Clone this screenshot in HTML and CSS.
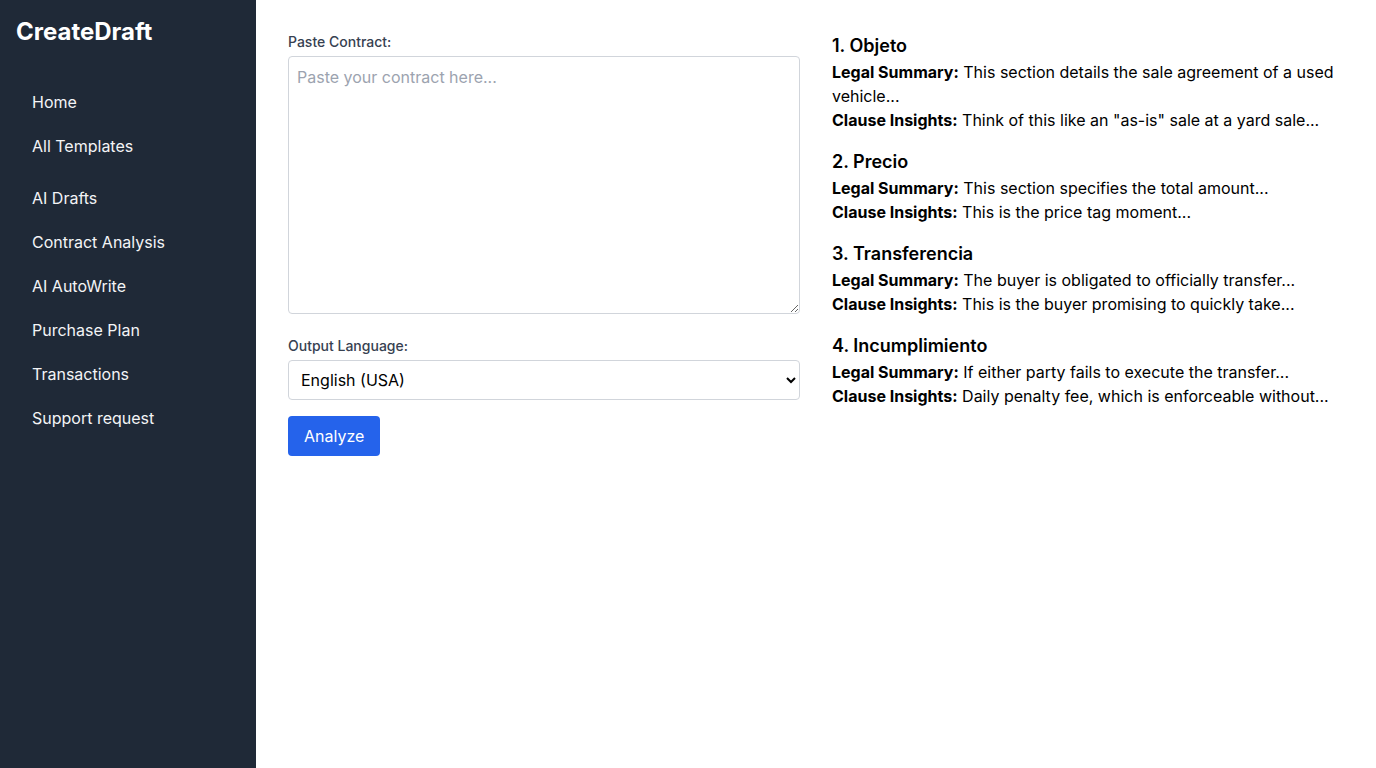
FILE: index.html
```html
<!DOCTYPE html>
<html lang="en">
<head>
<meta charset="utf-8">
<title>CreateDraft - Contract Analysis</title>
<link rel="stylesheet" href="styles.css">
</head>
<body>
<div class="layout">
  <aside class="sidebar">
    <div class="brand">CreateDraft</div>
    <ul class="nav">
      <li><a href="#">Home</a></li>
      <li><a href="#">All Templates</a></li>
    </ul>
    <ul class="nav nav-group">
      <li><a href="#">AI Drafts</a></li>
      <li><a href="#">Contract Analysis</a></li>
      <li><a href="#">AI AutoWrite</a></li>
      <li><a href="#">Purchase Plan</a></li>
      <li><a href="#">Transactions</a></li>
      <li><a href="#">Support request</a></li>
    </ul>
  </aside>
  <main class="main">
    <div class="columns">
      <section class="form">
        <label class="label" for="contract">Paste Contract:</label>
        <textarea id="contract" class="textarea" rows="10" placeholder="Paste your contract here..."></textarea>
        <label class="label label-lang" for="lang">Output Language:</label>
        <select id="lang" class="select">
          <option>English (USA)</option>
          <option>Español</option>
        </select>
        <button class="btn" type="button">Analyze</button>
      </section>
      <section class="results">
        <div class="clause">
          <h3 class="clause-title">1. Objeto</h3>
          <p><strong>Legal Summary:</strong> This section details the sale agreement of a used vehicle...</p>
          <p><strong>Clause Insights:</strong> Think of this like an "as-is" sale at a yard sale...</p>
        </div>
        <div class="clause">
          <h3 class="clause-title">2. Precio</h3>
          <p><strong>Legal Summary:</strong> This section specifies the total amount...</p>
          <p><strong>Clause Insights:</strong> This is the price tag moment...</p>
        </div>
        <div class="clause">
          <h3 class="clause-title">3. Transferencia</h3>
          <p><strong>Legal Summary:</strong> The buyer is obligated to officially transfer...</p>
          <p><strong>Clause Insights:</strong> This is the buyer promising to quickly take...</p>
        </div>
        <div class="clause">
          <h3 class="clause-title">4. Incumplimiento</h3>
          <p><strong>Legal Summary:</strong> If either party fails to execute the transfer...</p>
          <p><strong>Clause Insights:</strong> Daily penalty fee, which is enforceable without...</p>
        </div>
      </section>
    </div>
  </main>
</div>
</body>
</html>
```

FILE: styles.css
```css
* { box-sizing: border-box; }
html, body {
  margin: 0;
  padding: 0;
  height: 100%;
}
body {
  font-family: Inter, "Noto Sans", "Liberation Sans", sans-serif;
  font-size: 16px;
  line-height: 24px;
  color: #000;
  background: #fff;
}
.layout {
  display: flex;
  min-height: 100vh;
}
.sidebar {
  width: 256px;
  flex: 0 0 256px;
  background: #1f2937;
  color: #fff;
  padding: 16px;
}
.brand {
  font-size: 24px;
  line-height: 32px;
  font-weight: 700;
  margin-bottom: 32px;
}
.nav {
  list-style: none;
  margin: 0;
  padding: 0;
}
.nav-group {
  margin-top: 8px;
}
.nav li a {
  display: block;
  padding: 10px 16px;
  color: #f3f4f6;
  text-decoration: none;
  border-radius: 4px;
}
.main {
  flex: 1;
  padding: 32px;
}
.columns {
  display: grid;
  grid-template-columns: 1fr 1fr;
  gap: 32px;
}
.form {
  display: flex;
  flex-direction: column;
  align-items: flex-start;
}
.label {
  display: block;
  font-size: 14px;
  line-height: 20px;
  font-weight: 500;
  color: #374151;
  margin-bottom: 4px;
}
.label-lang {
  margin-top: 22px;
}
.textarea {
  width: 100%;
  height: 258px;
  padding: 8px;
  border: 1px solid #d1d5db;
  border-radius: 4px;
  font-family: inherit;
  font-size: 16px;
  line-height: 24px;
  color: #111827;
  margin: 0;
}
.textarea::placeholder {
  color: #9ca3af;
}
.select {
  width: 100%;
  height: 40px;
  padding: 0 8px 0 8px;
  border: 1px solid #d1d5db;
  border-radius: 4px;
  background: #fff;
  font-family: inherit;
  font-size: 16px;
  color: #000;
  margin: 0;
}
.btn {
  margin-top: 16px;
  background: #2563eb;
  color: #fff;
  border: 0;
  border-radius: 4px;
  padding: 8px 16px;
  font-family: inherit;
  font-size: 16px;
  line-height: 24px;
  cursor: pointer;
}
.results {
  display: flex;
  flex-direction: column;
  gap: 16px;
}
.clause-title {
  margin: 0;
  font-size: 18px;
  line-height: 28px;
  font-weight: 600;
  color: #000;
}
.clause p {
  margin: 0;
}
.clause strong {
  font-weight: 700;
}
```
